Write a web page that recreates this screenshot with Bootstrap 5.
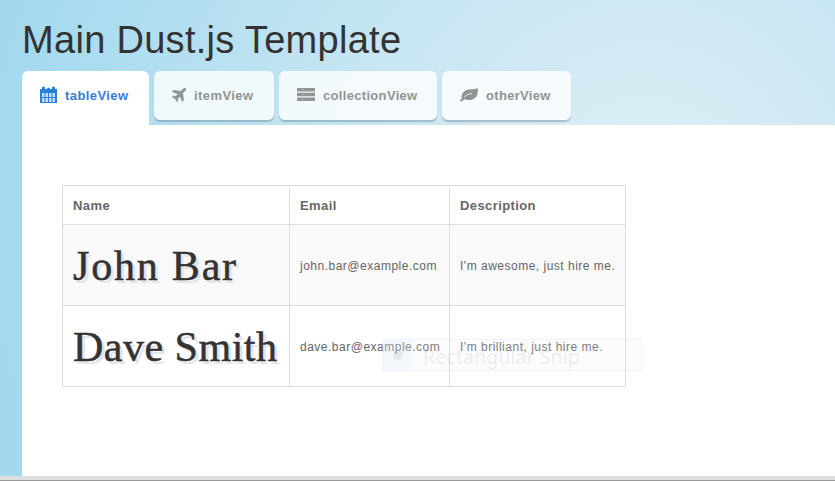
<!DOCTYPE html>
<html lang="en">
<head>
<meta charset="utf-8">
<meta name="viewport" content="width=device-width, initial-scale=1">
<title>Main Dust.js Template</title>
<link href="https://cdn.jsdelivr.net/npm/bootstrap@5.3.0/dist/css/bootstrap.min.css" rel="stylesheet">
<style>
body{font-family:"Liberation Sans",Arial,sans-serif;font-size:13px;height:481px;color:#666;overflow:hidden;
background:radial-gradient(circle at 645px 210px,#e0f0f5 0,#d1e9f4 180px,#c6e6f2 310px,#b4dff1 490px,#a3d9ee 660px)}
.page{padding-left:22px}
.page-title{font-size:38px;line-height:50px;letter-spacing:.3px;color:#333;padding-top:15px;height:71px;white-space:nowrap}
.tabs{height:54px;gap:5px}
.tabs .nav-link{height:49px;padding:0 0 0 18px;border-radius:6px;background:rgba(255,255,255,.8);box-shadow:0 2px 1px rgba(80,110,125,.35);color:#8f9494;font-weight:700;white-space:nowrap;letter-spacing:.32px}
.tabs .nav-link.active{height:54px;padding-bottom:5px;border-radius:6px 6px 0 0;background:#fff;box-shadow:none;color:#3b7bd6}
.tabs svg{flex:none;fill:currentColor;position:relative;top:-1px}
.tabs .nav-link.active svg{color:#2a80d8}
.w1{width:127px}.w2{width:120px}.w3{width:158px}.w4{width:129px}
.w1,.w2{letter-spacing:.42px!important}
.panel{height:351px;padding:60px 0 0 40px}
.people{width:564px;table-layout:fixed;border-collapse:collapse;--bs-table-bg:transparent;border-color:#ddd}
.people>:not(caption)>*>*{padding:2px 10px 0;vertical-align:middle;border:1px solid #ddd;white-space:nowrap;color:#666;box-shadow:none}
.people thead tr{height:39px}
.people thead th{letter-spacing:.4px}
.people tbody tr{height:81px}
.people tbody tr:first-child td{background:#f9f9f9}
.people tbody td{font-size:12px;letter-spacing:.5px}
.fullname{font-family:Georgia,"Liberation Serif",serif;font-size:42px;line-height:50px;color:#333;-webkit-text-stroke:.5px #333;text-shadow:3px 3px 0 #e4e4e7;display:block}
.n1{letter-spacing:1.8px}.n2{letter-spacing:.5px}
.snip{position:absolute;left:382px;top:339px;width:260px;height:32px;border:1px solid rgba(180,220,250,.22);background:rgba(225,240,252,.18);font-family:"Noto Sans","Open Sans",sans-serif;font-size:19.700px;line-height:34px;color:rgba(90,90,90,.1);pointer-events:none}
.snip-icon{width:30px;height:30px;background:rgba(215,235,250,.2)}
.snip-icon i{width:10px;height:10px;border-radius:50%;background:rgba(110,110,110,.1)}
.snip-label{margin-left:10px;white-space:nowrap}
.footer-edge{height:5px;background:#dedede;border-bottom:1px solid #999}
</style>
<script src="https://cdn.jsdelivr.net/npm/bootstrap@5.3.0/dist/js/bootstrap.bundle.min.js"></script>
</head>
<body>
<div class="page">
<h1 class="page-title m-0 fw-normal">Main Dust.js Template</h1>
<nav class="nav tabs flex-nowrap align-items-start">
<a class="nav-link active w1 d-flex align-items-center" href="#"><svg width="17" height="17" viewBox="0 0 17 17"><path d="M0 3h2V1.500Q3.500-.5 5 1.500V3h1.500L8.500 1.500 10.500 3H12V1.500Q13.500-.5 15 1.500V3h2v14H0z"/><path d="M2 7h2.500v4H2zM5.500 7H8v4H5.500zM9 7h2.500v4H9zM12.500 7H15v4h-2.500zM2 12h2.500v4H2zM5.500 12H8v4H5.500zM9 12h2.500v4H9zM12.500 12H15v4h-2.500z" fill="#c5dcf5"/></svg><span class="ms-2">tableView</span></a>
<a class="nav-link w2 d-flex align-items-center" href="#"><svg width="14" height="14" viewBox="0 0 14 14"><path d="M14 .2Q14.300 1.600 12.800 3L10.700 5.200l1 6.800-1.400 1.500L8 8.500 5.800 10.500l.2 2-1.200 1.200-1.500-2.900L.2 9.300l1.200-1.200 2.400.1L6 6 .2 3.700 1.700 2.200l6.800 1L11.200 1Q12.800-.2 14 .2z" stroke="currentColor" stroke-width=".5"/></svg><span class="ms-2">itemView</span></a>
<a class="nav-link w3 d-flex align-items-center" href="#"><svg width="18" height="13" viewBox="0 0 18 13"><path d="M0 0h18v3.500H0zM0 4.700h18v3.600H0zM0 9.500h18V13H0z"/><path d="M5 .5h1v1H5zM6 6h1v1H6zM5 10.500h1v1H5z" fill="#c5cacb"/></svg><span class="ms-2">collectionView</span></a>
<a class="nav-link w4 d-flex align-items-center" href="#"><svg width="18" height="14" viewBox="0 0 18 14"><path d="M17.500 0Q18.500 4 17 7.500 14.500 12 9 12 6.500 12 4.300 11.200L1.500 13.500Q.4 13.800 0 12.500L1.800 10.500Q.8 6.500 4 3.500 6.500 1.300 11 1.300 15.500 1.500 17.500 0z"/><path d="M4 9Q7 5.500 12 5.500" fill="none" stroke="#e4eaec" stroke-width="1"/></svg><span class="ms-2">otherView</span></a>
</nav>
<main class="panel bg-white">
<table class="table people mb-0">
<colgroup><col style="width:227px"><col style="width:160px"><col style="width:176px"></colgroup>
<thead><tr><th>Name</th><th>Email</th><th>Description</th></tr></thead>
<tbody>
<tr><td><span class="fullname n1">John Bar</span></td><td>john.bar@example.com</td><td>I'm awesome, just hire me.</td></tr>
<tr><td><span class="fullname n2">Dave Smith</span></td><td>dave.bar@example.com</td><td>I'm brilliant, just hire me.</td></tr>
</tbody>
</table>
</main>
</div>
<div class="footer-edge"></div>
<div class="snip d-flex"><span class="snip-icon d-flex align-items-center justify-content-center"><i></i></span><span class="snip-label">Rectangular Snip</span></div>
</body>
</html>
